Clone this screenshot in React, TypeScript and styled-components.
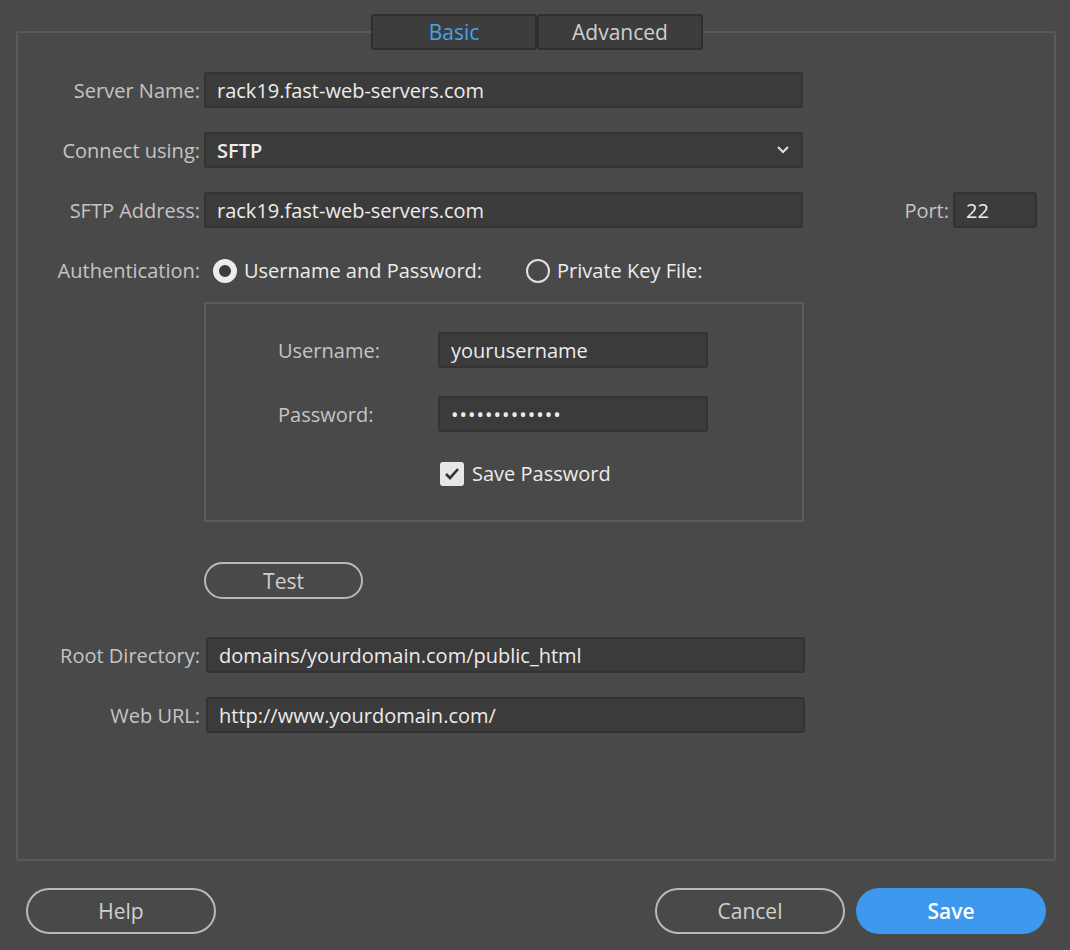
import React from "react";
import styled, { createGlobalStyle } from "styled-components";

const Global = createGlobalStyle`
  html, body { margin: 0; padding: 0; background: #494949; }
  body { font-family: "Open Sans", "Liberation Sans", sans-serif; color: #d6d6d6; }
`;

const Page = styled.div`
  width: 1070px; height: 950px; box-sizing: border-box; padding: 14px 14px 0 16px;
  display: flex; flex-direction: column;
`;
const Tabs = styled.div`
  display: flex; justify-content: center; height: 0; position: relative; z-index: 1;
  padding-left: 2px;
`;
const Tab = styled.div<{ $active?: boolean }>`
  width: 166px; height: 36px; box-sizing: border-box; background: #3d3d3d;
  border: 2px solid #2f2f2f; border-radius: 3px; display: flex; align-items: center; justify-content: center;
  font-size: 21px; color: ${p => (p.$active ? "#46a3ec" : "#cfcfcf")};
`;
const Frame = styled.div`
  margin-top: 17px; height: 830px; box-sizing: border-box; border: 2px solid #5a5a5a; border-radius: 3px;
  padding: 39px 0 0 0; display: flex; flex-direction: column;
`;
const Row = styled.div<{ $mt?: number }>`
  display: flex; align-items: center; margin-top: ${p => p.$mt ?? 0}px;
`;
const Label = styled.div<{ $w?: number }>`
  width: ${p => p.$w ?? 182}px; text-align: right; font-size: 20px; color: #c4c4c4; padding-right: 4px; flex-shrink: 0;
  white-space: nowrap;
`;
const InnerLabel = styled.div`
  width: 160px; padding-left: 72px; font-size: 20px; color: #c4c4c4; flex-shrink: 0;
`;
const Input = styled.div<{ $w?: number }>`
  width: ${p => p.$w ?? 599}px; height: 36px; box-sizing: border-box; background: #3b3b3b;
  border: 2px solid #333; border-radius: 3px; padding: 0 11px; display: flex; align-items: center;
  font-size: 20px; color: #ececec; justify-content: space-between; white-space: nowrap;
`;
const Radio = styled.span<{ $on?: boolean }>`
  width: 24px; height: 24px; border-radius: 50%; box-sizing: border-box; display: inline-block;
  border: ${p => (p.$on ? "6px solid #ececec" : "2px solid #e0e0e0")}; background: ${p => (p.$on ? "#3b3b3b" : "transparent")};
  margin-right: 7px;
`;
const Choice = styled.div<{ $ml?: number }>`
  display: flex; align-items: center; font-size: 20px; color: #ececec; margin-left: ${p => p.$ml ?? 0}px; white-space: nowrap;
`;
const Box = styled.div`
  margin-left: 186px; width: 600px; height: 220px; box-sizing: border-box; border: 2px solid #5d5d5d; border-radius: 3px;
  margin-top: 18px; display: flex; flex-direction: column; padding-top: 28px;
`;
const Check = styled.span`
  width: 24px; height: 24px; border-radius: 3px; background: #e6e6e6; display: inline-flex;
  align-items: center; justify-content: center; margin-right: 8px;
`;
const PillButton = styled.button<{ $w: number; $h: number; $primary?: boolean }>`
  width: ${p => p.$w}px; height: ${p => p.$h}px; border-radius: ${p => p.$h / 2}px; box-sizing: border-box;
  font-family: inherit; font-size: 21px; cursor: pointer;
  border: ${p => (p.$primary ? "none" : "2px solid #b9b9b9")};
  background: ${p => (p.$primary ? "#3d98ee" : "transparent")};
  color: ${p => (p.$primary ? "#fff" : "#d0d0d0")};
  font-weight: ${p => (p.$primary ? 600 : 400)};
`;
const Footer = styled.div`
  display: flex; align-items: center; padding: 27px 10px 0 10px; gap: 11px;
`;
const Spacer = styled.div` flex: 1; `;

export default function App() {
  return (
    <Page>
      <Global />
      <Tabs>
        <Tab $active>Basic</Tab>
        <Tab>Advanced</Tab>
      </Tabs>
      <Frame>
        <Row><Label>Server Name:</Label><Input>rack19.fast-web-servers.com</Input></Row>
        <Row $mt={24}><Label>Connect using:</Label><Input style={{ fontWeight: 600 }}>SFTP
          <svg width="14" height="10" viewBox="0 0 14 10"><path d="M2 2l5 5 5-5" stroke="#e0e0e0" strokeWidth="2" fill="none"/></svg>
        </Input></Row>
        <Row $mt={24}><Label>SFTP Address:</Label><Input>rack19.fast-web-servers.com</Input>
          <Label $w={146}>Port:</Label><Input $w={84}>22</Input></Row>
        <Row $mt={29}><Label>Authentication:</Label>
          <Choice $ml={9}><Radio $on />Username and Password:</Choice>
          <Choice $ml={44}><Radio />Private Key File:</Choice></Row>
        <Box>
          <Row><InnerLabel>Username:</InnerLabel><Input $w={270}>yourusername</Input></Row>
          <Row $mt={28}><InnerLabel>Password:</InnerLabel><Input $w={270} style={{ letterSpacing: "1px" }}>•••••••••••••</Input></Row>
          <Row $mt={28}><Choice $ml={234}><Check>
            <svg width="16" height="14" viewBox="0 0 16 14"><path d="M2 7l4 4 8-9" stroke="#333" strokeWidth="2.6" fill="none"/></svg>
          </Check>Save Password</Choice></Row>
        </Box>
        <Row $mt={40}><PillButton $w={159} $h={37} style={{ marginLeft: 186 }}>Test</PillButton></Row>
        <Row $mt={38}><Label>Root Directory:</Label><Input style={{ marginLeft: 2 }}>domains/yourdomain.com/public_html</Input></Row>
        <Row $mt={24}><Label>Web URL:</Label><Input style={{ marginLeft: 2 }}>http://www.yourdomain.com/</Input></Row>
      </Frame>
      <Footer>
        <PillButton $w={190} $h={46}>Help</PillButton>
        <Spacer />
        <PillButton $w={190} $h={46}>Cancel</PillButton>
        <PillButton $w={190} $h={46} $primary>Save</PillButton>
      </Footer>
    </Page>
  );
}
